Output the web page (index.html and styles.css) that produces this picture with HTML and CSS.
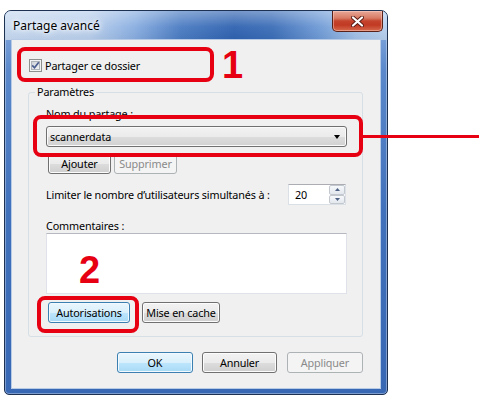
FILE: index.html
```html
<!DOCTYPE html>
<html lang="fr">
<head>
<meta charset="utf-8">
<title>Partage avancé</title>
<link rel="stylesheet" href="styles.css">
</head>
<body>
<div class="stage">
  <div class="window">
    <div class="titlebar">
      <span class="title">Partage avancé</span>
      <div class="close">
        <svg width="13" height="11" viewBox="0 0 13 11"><path d="M2 1.5 L11 9.5 M11 1.5 L2 9.5" stroke="#5a1c14" stroke-width="4" stroke-linecap="round"/><path d="M2 1.5 L11 9.5 M11 1.5 L2 9.5" stroke="#ffffff" stroke-width="2.2" stroke-linecap="round"/></svg>
      </div>
    </div>
    <div class="client">
      <div class="share-row">
        <span class="check">
          <svg width="13" height="13" viewBox="0 0 13 13"><defs><linearGradient id="cg" x1="0" y1="0" x2="1" y2="1"><stop offset="0" stop-color="#cbcfd5"/><stop offset="1" stop-color="#f6f6f6"/></linearGradient></defs><rect x="0.5" y="0.5" width="12" height="12" fill="#f3f3f3" stroke="#8e8f8f"/><rect x="2.5" y="2.5" width="8" height="8" fill="url(#cg)" stroke="#aeb3b9"/><path d="M3.2 6.3 L5.5 8.8 L9.8 3.2" fill="none" stroke="#4c5d8f" stroke-width="1.7"/></svg>
        </span>
        <span>Partager ce dossier</span>
      </div>
      <fieldset class="group">
        <legend>Paramètres</legend>
        <div class="gbody">
          <div class="lbl name-lbl">Nom du partage :</div>
          <div class="combo"><span>scannerdata</span><span class="arrow"></span></div>
          <div class="btn-row">
            <button class="btn add">Ajouter</button>
            <button class="btn disabled del">Supprimer</button>
          </div>
          <div class="limit-row">
            <span>Limiter le nombre d’utilisateurs simultanés à :</span>
            <div class="spin">
              <span class="spin-val">20</span>
              <div class="spin-btns">
                <span class="sb"><svg width="5" height="3" viewBox="0 0 5 3"><path d="M0 3 L2.5 0 L5 3Z" fill="#4d6185"/></svg></span>
                <span class="sb"><svg width="5" height="3" viewBox="0 0 5 3"><path d="M0 0 L2.5 3 L5 0Z" fill="#4d6185"/></svg></span>
              </div>
            </div>
          </div>
          <div class="lbl com-lbl">Commentaires :</div>
          <div class="textarea"></div>
          <div class="btn-row2">
            <button class="btn hot auth">Autorisations</button>
            <button class="btn cache">Mise en cache</button>
          </div>
        </div>
      </fieldset>
      <div class="footer">
        <button class="btn hot ok">OK</button>
        <button class="btn cancel">Annuler</button>
        <button class="btn disabled apply">Appliquer</button>
      </div>
    </div>
  </div>

  <div class="mark mark1"></div>
  <span class="num num1">1</span>
  <div class="mark mark2"></div>
  <div class="leader"></div>
  <span class="num num2">2</span>
  <div class="mark mark3"></div>
</div>
</body>
</html>
```
FILE: styles.css
```css
* { box-sizing: border-box; }
html, body { margin: 0; padding: 0; background: #ffffff; }
body {
  width: 479px;
  height: 396px;
  overflow: hidden;
  font-family: "Noto Sans", "Open Sans", sans-serif;
  font-size: 10.8px;
  letter-spacing: -0.15px;
  color: #000;
}
.stage {
  position: relative;
  width: 479px;
  height: 396px;
  padding: 10px 0 0 4px;
}
.window {
  width: 384px;
  height: 385px;
  border: 1px solid #1d3253;
  border-radius: 7px 7px 5px 5px;
  background: linear-gradient(180deg, #8fb2e2 0px, #5a88cb 60px, #4171bb 200px, #3867b3 100%);
  padding: 0 7px 6px 7px;
  display: flex;
  flex-direction: column;
  box-shadow: inset 0 0 0 1px rgba(255,255,255,0.35);
}
.titlebar {
  height: 29px;
  margin: 0 -7px;
  padding-left: 8px;
  display: flex;
  align-items: flex-start;
  border-radius: 6px 6px 0 0;
  background:
    linear-gradient(180deg, rgba(255,255,255,0.35) 0%, rgba(255,255,255,0.05) 55%, rgba(0,0,0,0.04) 100%),
    linear-gradient(90deg, #c6d9f0 0%, #b9cfec 22%, #88ade0 34%, #4a7bc2 46%, #2f62b0 60%, #3b6db7 70%, #6d99d5 82%, #a3c1e7 92%, #b6cfee 100%);
}
.title {
  font-size: 12px;
  letter-spacing: 0;
  line-height: 16px;
  margin-top: 7px;
  color: #000;
  text-shadow: 0 0 6px #ffffff, 0 0 10px #ffffff, 0 0 3px #eef4fb;
}
.close {
  margin-left: auto;
  margin-right: 4px;
  width: 51px;
  height: 21px;
  border: 1px solid #5a2118;
  border-top: none;
  border-radius: 0 0 5px 5px;
  background: linear-gradient(180deg, #e8a898 0%, #d87c66 35%, #c5432c 50%, #c13a24 70%, #d66a4c 100%);
  box-shadow: inset 0 0 0 1px rgba(255,220,210,0.45);
  display: flex;
  align-items: center;
  justify-content: center;
}
.client {
  flex: 1;
  background: #f0f0f0;
  box-shadow: 0 0 0 1px #b7cbe6;
  display: flex;
  flex-direction: column;
}
.share-row {
  margin: 19px 0 0 17px;
  height: 13px;
  display: flex;
  align-items: center;
  gap: 3px;
  line-height: 13px;
}
.check { width: 13px; height: 13px; display: block; }
.check svg { display: block; }
.group {
  margin: 13px 0 0 16px;
  width: 335px;
  padding: 0;
  border: 1px solid #d5dfe5;
  border-radius: 3px;
  min-width: 0;
}
.group legend {
  margin-left: 6px;
  padding: 0 2px;
  line-height: 14px;
}
.gbody {
  padding: 0 15px 13px 17px;
  display: flex;
  flex-direction: column;
}
.lbl { line-height: 14px; }
.name-lbl { margin-top: 8px; }
.combo {
  margin-top: 5px;
  height: 21px;
  border: 1px solid #707070;
  border-radius: 3px;
  background: linear-gradient(180deg, #f2f2f2 0%, #ebebeb 50%, #dddddd 51%, #d1d1d1 100%);
  box-shadow: inset 0 0 0 1px #fafafa;
  display: flex;
  align-items: center;
  padding: 0 6px 0 3px;
  line-height: 19px;
}
.combo .arrow {
  margin-left: auto;
  width: 0;
  height: 0;
  border-left: 3.5px solid transparent;
  border-right: 3.5px solid transparent;
  border-top: 4px solid #000;
}
.btn {
  font-family: inherit;
  font-size: 10.8px;
  letter-spacing: -0.15px;
  color: #000;
  height: 21px;
  padding: 0;
  line-height: 19px;
  text-align: center;
  border: 1px solid #707070;
  border-radius: 3px;
  background: linear-gradient(180deg, #f2f2f2 0%, #ebebeb 50%, #dddddd 51%, #cfcfcf 100%);
  box-shadow: inset 0 0 0 1px #fcfcfc;
}
.btn.hot {
  border-color: #3c7fb1;
  background: linear-gradient(180deg, #eaf6fd 0%, #d9f0fc 50%, #bee6fd 51%, #a7d9f5 100%);
  box-shadow: inset 0 0 0 1px #f2faff;
}
.btn.disabled {
  border-color: #adb2b5;
  background: #f4f4f4;
  color: #8a8a8a;
  box-shadow: none;
}
.btn-row { margin-top: 6px; display: flex; }
.add { width: 63px; margin-left: 2px; }
.del { width: 63px; margin-left: 3px; }
.limit-row {
  margin-top: 10px;
  height: 21px;
  display: flex;
  align-items: center;
}
.spin {
  margin-left: auto;
  margin-right: 1px;
  width: 58px;
  height: 21px;
  border: 1px solid #dbdfe6;
  border-top-color: #abadb3;
  background: #fff;
  display: flex;
  align-items: center;
  padding-left: 6px;
}
.spin-val { line-height: 19px; }
.spin-btns {
  margin-left: auto;
  width: 16px;
  height: 19px;
  display: flex;
  flex-direction: column;
}
.sb {
  flex: 1;
  border: 1px solid #c3c8cf;
  border-radius: 2px;
  background: linear-gradient(180deg, #f7f9fb 0%, #e3e8ee 100%);
  display: flex;
  align-items: center;
  justify-content: center;
}
.sb svg { display: block; }
.com-lbl { margin-top: 14px; }
.textarea {
  height: 61px;
  background: #fff;
  border: 1px solid #dfe3e9;
  border-top-color: #b5b8be;
}
.btn-row2 { margin-top: 8px; display: flex; }
.auth { width: 82px; margin-left: 2px; }
.cache { width: 78px; margin-left: 12px; }
.footer {
  margin-top: 15px;
  padding-right: 17px;
  display: flex;
  justify-content: flex-end;
}
.ok { width: 76px; }
.cancel { width: 75px; margin-left: 9px; }
.apply { width: 76px; margin-left: 10px; }

/* annotations */
.mark {
  position: absolute;
  border: 4px solid #e60012;
  border-radius: 8px;
}
.mark1 { left: 17px; top: 47px; width: 197px; height: 35px; }
.mark2 { left: 33px; top: 115px; width: 330px; height: 42px; }
.mark3 { left: 37px; top: 296px; width: 102px; height: 37px; }
.leader {
  position: absolute;
  left: 362px;
  top: 135px;
  width: 117px;
  height: 3px;
  background: #e60012;
}
.num {
  position: absolute;
  font-family: "Liberation Sans", Arial, sans-serif;
  font-weight: bold;
  font-size: 38px;
  line-height: 38px;
  letter-spacing: 0;
  color: #e60012;
}
.num1 { left: 222px; top: 46px; }
.num2 { left: 79px; top: 251px; }
```
